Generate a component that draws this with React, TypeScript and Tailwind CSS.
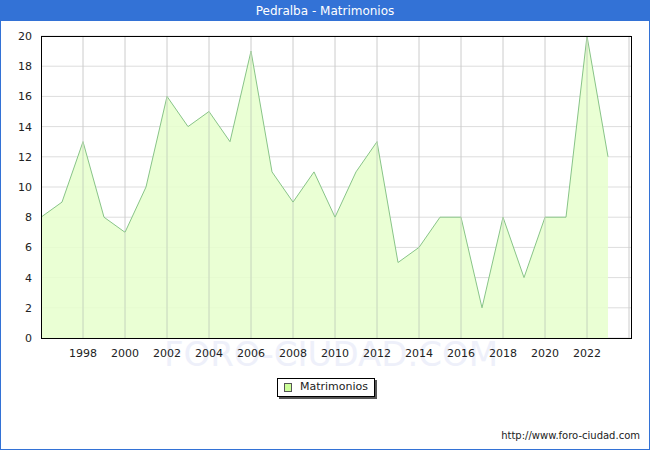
const data=[8,9,13,8,7,10,16,14,15,13,19,11,9,11,8,11,13,5,6,8,8,2,8,4,8,8,20,12];
const X=(i:number)=>40+i*21;const Y=(v:number)=>337-v*15.1;
export default function App(){
const pts=data.map((v,i)=>`${X(i)},${Y(v)}`).join(" ");
return(<div className="w-[650px] h-[450px] bg-white border border-[#3372d6] flex flex-col" style={{fontFamily:'"DejaVu Sans",sans-serif'}}>
<div className="h-[20px] bg-[#3372d6] text-white text-[12px] flex items-center justify-center shrink-0">Pedralba - Matrimonios</div>
<div className="relative flex-1">
<svg width="648" height="428" className="absolute left-0 top-0" style={{fontFamily:'"DejaVu Sans",sans-serif'}}>
<text x="330" y="345" textAnchor="middle" fontSize="34" fill="#eef0fa">FORO-CIUDAD.COM</text>
{Array.from({length:11},(_,k)=><line key={'h'+k} x1="40" x2="630" y1={Y(k*2)-20} y2={Y(k*2)-20} stroke="#ddd"/>)}
{Array.from({length:14},(_,k)=><line key={'v'+k} x1={X(2+k*2)} x2={X(2+k*2)} y1="15" y2="317" stroke="#ccc"/>)}
<g transform="translate(0,-20)">
<polygon points={`40,337 ${pts} ${X(27)},337`} fill="#e6ffcc" fillOpacity="0.85"/>
<polyline points={pts} fill="none" stroke="#88c488" strokeWidth="1"/>
{Array.from({length:14},(_,k)=><line key={'v2'+k} x1={X(2+k*2)} x2={X(2+k*2)} y1={Y(data[2+k*2]??0)} y2="337" stroke="#c8d8c0"/>)}
<rect x="40.5" y="35.5" width="590" height="302" fill="none" stroke="#000"/>
{Array.from({length:11},(_,k)=><text key={'y'+k} x="31" y={Y(k*2)+4} textAnchor="end" fontSize="11" fill="#222">{k*2}</text>)}
{Array.from({length:13},(_,k)=><text key={'x'+k} x={X(2+k*2)} y="356" textAnchor="middle" fontSize="11" fill="#222">{1998+k*2}</text>)}
</g>
</svg>
<div className="absolute left-[276px] top-[357px] w-[98px] h-[19px] bg-white border border-black shadow-[2px_2px_0_#555] flex items-center gap-[8px] px-[6px] text-[11px] text-[#222]"><span className="w-[9px] h-[9px] bg-[#ccff99] border border-[#555]"></span>Matrimonios</div>
<div className="absolute right-[9px] top-[407px] text-[10px] text-[#222]">http://www.foro-ciudad.com</div>
</div></div>);}
